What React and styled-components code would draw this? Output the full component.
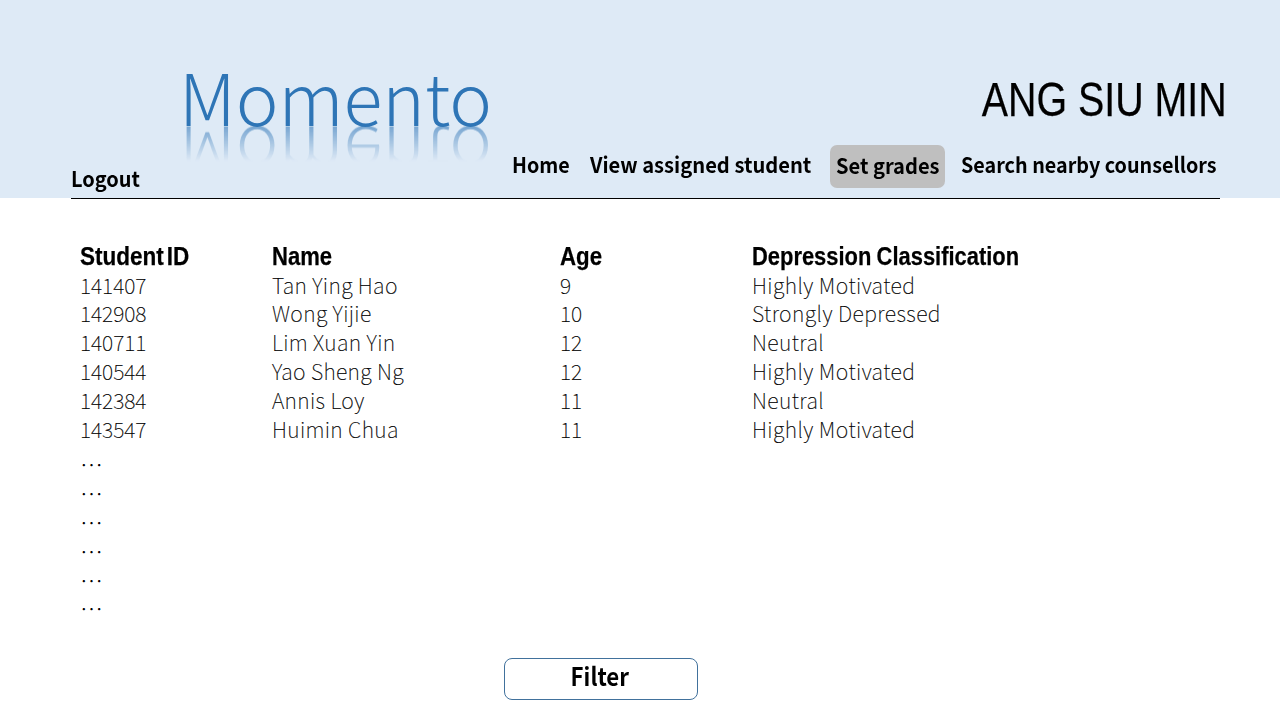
import React from 'react';
import styled, { createGlobalStyle } from 'styled-components';

const sans = '"Noto Sans CJK SC", "Noto Sans", sans-serif';
const narrow = '"Liberation Sans", Arial, sans-serif';

const GlobalStyle = createGlobalStyle`
  * { box-sizing: border-box; }
  body { margin: 0; background: #fff; color: #000; font-family: ${sans}; }
`;

const Page = styled.div`
  width: 1280px;
  height: 720px;
  overflow: hidden;
  display: flex;
  flex-direction: column;
`;

const Header = styled.header`
  height: 198px;
  flex: none;
  background: #deeaf6;
  display: flex;
  justify-content: space-between;
`;

const Brand = styled.div`
  width: 500px;
  display: flex;
  flex-direction: column;
  padding: 49px 0 0 71px;
`;

const Logo = styled.h1`
  margin: 0 0 0 108px;
  width: 330px;
  height: 92px;
  font-size: 72px;
  line-height: 92px;
  font-weight: 300;
  color: #2e75b6;
  -webkit-box-reflect: below -29.5px
    linear-gradient(to bottom, transparent 46%, rgba(0, 0, 0, 0.6) 85%);
`;

const Account = styled.div`
  width: 780px;
  display: flex;
  flex-direction: column;
  padding: 72px 0 0;
`;

const Condensed = styled.span`
  display: inline-block;
  transform: scaleX(${(p) => p.$scale});
  transform-origin: ${(p) => p.$origin || 'left'} center;
  word-spacing: ${(p) => p.$space || 0}px;
  white-space: nowrap;
`;

const UserName = styled.div`
  padding-right: 53px;
  height: 56px;
  text-align: right;
  font: 400 48px/56px ${narrow};
  -webkit-text-stroke: 0.25px #000;
`;

const Nav = styled.nav`
  display: flex;
  align-items: flex-start;
  margin-top: 17px;
  padding-left: 12px;
`;

const NavItem = styled.a`
  width: ${(p) => p.$width}px;
  height: 43px;
  padding-left: ${(p) => (p.$active ? 5.5 : 0)}px;
  padding-top: ${(p) => (p.$active ? 1 : 0)}px;
  margin-right: ${(p) => p.$gap}px;
  border-radius: 7px;
  background: ${(p) => (p.$active ? '#bfbfbf' : 'transparent')};
  font-size: 21.33px;
  line-height: 38px;
  font-weight: 700;
`;

const Logout = styled.a`
  margin: 17px 0 0;
  font-size: 21.33px;
  line-height: 40px;
  font-weight: 700;
`;

const Divider = styled.hr`
  flex: none;
  width: 1149px;
  height: 1px;
  margin: 0 0 0 71px;
  border: 0;
  background: #000;
`;

const Table = styled.section`
  height: 459px;
  padding: 42.65px 0 0 80px;
`;

const Row = styled.div`
  display: grid;
  grid-template-columns: 192px 288px 192px 1fr;
`;

const HeadCell = styled.div`
  height: 29px;
  font: 700 26.67px/29px ${narrow};
  -webkit-text-stroke: 0.25px #000;
`;

const Cell = styled.div`
  height: 28.8px;
  font-size: 21.33px;
  line-height: 28.8px;
  font-weight: 100;
  letter-spacing: ${(p) => p.$spacing || 0}px;
  white-space: nowrap;
  -webkit-text-stroke: 0.2px #000;
`;

const MoreRows = styled.div`
  padding-top: 7px;
`;

const MoreCell = styled(Cell)`
  font-size: 23px;
  -webkit-text-stroke: 0;
`;

const FilterButton = styled.button`
  width: 194px;
  height: 42px;
  margin-left: 504px;
  padding: 0 2px 7px 0;
  border: 1px solid #41719c;
  border-radius: 8px;
  background: #fff;
  color: #000;
  font: 700 25px/33px ${sans};
`;

const nav = [
  { label: 'Home', width: 58, gap: 19.5, scale: 0.925 },
  { label: 'View assigned student', width: 222, gap: 18.5, scale: 0.945 },
  { label: 'Set grades', width: 115, gap: 15.5, scale: 0.942, active: true },
  { label: 'Search nearby counsellors', width: 258, gap: 0, scale: 0.927 },
];

const columns = [
  { label: 'Student ID', scale: 0.845, space: -4 },
  { label: 'Name', scale: 0.827 },
  { label: 'Age', scale: 0.835 },
  { label: 'Depression Classification', scale: 0.822, space: -1 },
];

const students = [
  ['141407', 'Tan Ying Hao', '9', 'Highly Motivated'],
  ['142908', 'Wong Yijie', '10', 'Strongly Depressed'],
  ['140711', 'Lim Xuan Yin', '12', 'Neutral'],
  ['140544', 'Yao Sheng Ng', '12', 'Highly Motivated'],
  ['142384', 'Annis Loy', '11', 'Neutral'],
  ['143547', 'Huimin Chua', '11', 'Highly Motivated'],
];

const spacing = [-0.05, 0.35, 0, 0.44];

export default function App() {
  return (
    <Page>
      <GlobalStyle />
      <Header>
        <Brand>
          <Logo>Momento</Logo>
          <Logout><Condensed $scale={0.937}>Logout</Condensed></Logout>
        </Brand>
        <Account>
          <UserName><Condensed $scale={0.82} $origin="right">ANG SIU MIN</Condensed></UserName>
          <Nav>
            {nav.map((n) => (
              <NavItem key={n.label} $width={n.width} $gap={n.gap} $active={n.active}>
                <Condensed $scale={n.scale}>{n.label}</Condensed>
              </NavItem>
            ))}
          </Nav>
        </Account>
      </Header>
      <Divider />
      <Table>
        <Row>
          {columns.map((c) => (
            <HeadCell key={c.label}>
              <Condensed $scale={c.scale} $space={c.space}>{c.label}</Condensed>
            </HeadCell>
          ))}
        </Row>
        {students.map((s) => (
          <Row key={s[0]}>
            {s.map((v, j) => <Cell key={j} $spacing={spacing[j]}>{v}</Cell>)}
          </Row>
        ))}
        <MoreRows>
          {Array.from({ length: 6 }, (_, i) => (
            <Row key={i}><MoreCell>…</MoreCell></Row>
          ))}
        </MoreRows>
      </Table>
      <FilterButton><Condensed $scale={0.89} $origin="center">Filter</Condensed></FilterButton>
    </Page>
  );
}
